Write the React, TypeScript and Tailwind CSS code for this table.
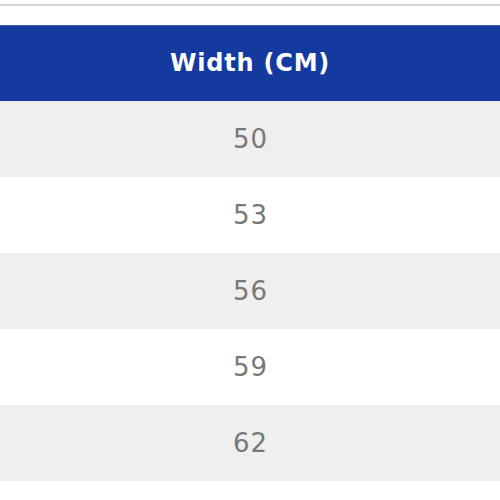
const widths = [50, 53, 56, 59, 62];

export default function App() {
  return (
    <div className="w-[500px] h-[500px] bg-white font-['DejaVu_Sans',sans-serif] overflow-hidden">
      <div className="pt-[4px]">
        <div className="h-[2px] bg-[#d4d4d4]" />
      </div>
      <div className="mt-[19px]">
        {/* Header */}
        <div className="h-[76px] bg-[#143a9f] border-t border-[#3d5db3] flex items-center justify-center">
          <span className="text-white text-[24px] font-bold tracking-[0.8px] translate-y-[-1px]">Width (CM)</span>
        </div>
        {/* Rows */}
        {widths.map((w, i) => (
          <div
            key={w}
            className={`h-[76px] flex items-center justify-center ${i % 2 === 0 ? "bg-[#efefef]" : "bg-white"}`}
          >
            <span className="text-[#787878] text-[26px] tracking-[1px] pl-[1px]">{w}</span>
          </div>
        ))}
      </div>
    </div>
  );
}
